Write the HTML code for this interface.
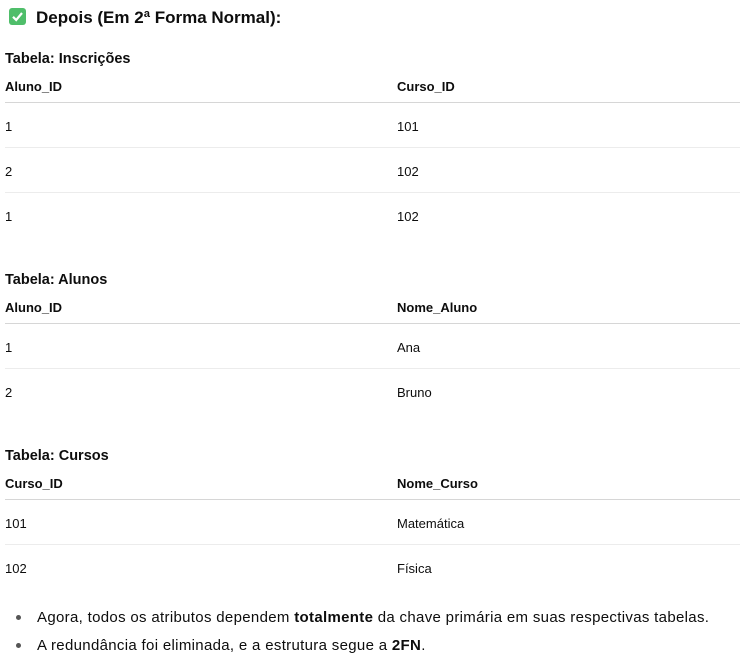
<!DOCTYPE html>
<html><head><meta charset="utf-8"><style>
body{margin:0;width:740px;height:670px;background:#fff;font-family:"Liberation Sans",sans-serif;color:#0d0d0d;position:relative;overflow:hidden}
.a{position:absolute;white-space:nowrap}
.h{font-size:17px;font-weight:bold;top:8px;left:36px}
.t{font-size:14.5px;font-weight:bold;left:5px}
.th{font-size:13px;font-weight:bold}
.td{font-size:13px}
.l{position:absolute;left:5px;width:735px;height:1px;background:#ececec}
.l.hd{background:#d6d6d6}
.b{font-size:15px;letter-spacing:0.32px;left:37px}
.dot{position:absolute;left:16px;width:5px;height:5px;border-radius:50%;background:#555}
</style></head><body>
<div class="a" style="left:9px;top:8px;width:17px;height:17px;background:#4fbe6a;border-radius:3px">
<svg width="17" height="17" viewBox="0 0 17 17"><path d="M4 8.8 L7.2 12 L13 5" stroke="#fff" stroke-width="2.2" fill="none"/></svg></div>
<div class="a h">Depois (Em 2ª Forma Normal):</div>

<div class="a t" style="top:51px">Tabela: Inscrições</div>
<div class="a th" style="left:5px;top:79px">Aluno_ID</div><div class="a th" style="left:397px;top:79px">Curso_ID</div>
<div class="l hd" style="top:102px"></div>
<div class="a td" style="left:5px;top:119px">1</div><div class="a td" style="left:397px;top:119px">101</div>
<div class="l" style="top:147px"></div>
<div class="a td" style="left:5px;top:164px">2</div><div class="a td" style="left:397px;top:164px">102</div>
<div class="l" style="top:192px"></div>
<div class="a td" style="left:5px;top:209px">1</div><div class="a td" style="left:397px;top:209px">102</div>

<div class="a t" style="top:272px">Tabela: Alunos</div>
<div class="a th" style="left:5px;top:300px">Aluno_ID</div><div class="a th" style="left:397px;top:300px">Nome_Aluno</div>
<div class="l hd" style="top:323px"></div>
<div class="a td" style="left:5px;top:340px">1</div><div class="a td" style="left:397px;top:340px">Ana</div>
<div class="l" style="top:368px"></div>
<div class="a td" style="left:5px;top:385px">2</div><div class="a td" style="left:397px;top:385px">Bruno</div>

<div class="a t" style="top:448px">Tabela: Cursos</div>
<div class="a th" style="left:5px;top:476px">Curso_ID</div><div class="a th" style="left:397px;top:476px">Nome_Curso</div>
<div class="l hd" style="top:499px"></div>
<div class="a td" style="left:5px;top:516px">101</div><div class="a td" style="left:397px;top:516px">Matemática</div>
<div class="l" style="top:544px"></div>
<div class="a td" style="left:5px;top:561px">102</div><div class="a td" style="left:397px;top:561px">Física</div>

<div class="dot" style="top:615px"></div>
<div class="a b" style="top:609px">Agora, todos os atributos dependem <b>totalmente</b> da chave primária em suas respectivas tabelas.</div>
<div class="dot" style="top:643px"></div>
<div class="a b" style="top:637px">A redundância foi eliminada, e a estrutura segue a <b>2FN</b>.</div>
</body></html>
